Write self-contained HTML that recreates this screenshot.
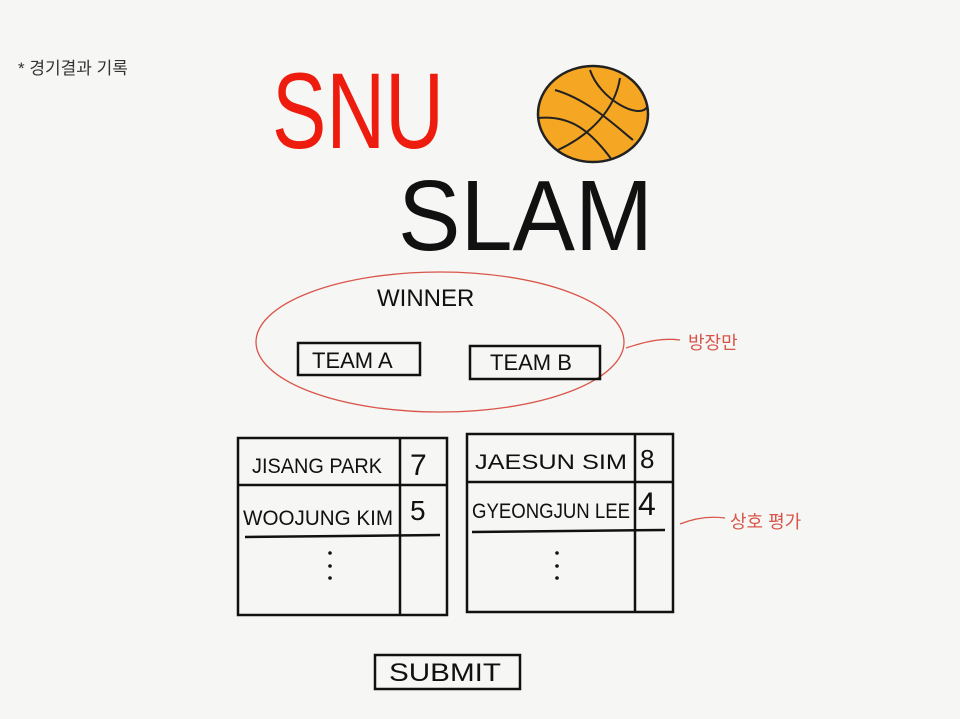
<!DOCTYPE html>
<html><head><meta charset="utf-8"><style>
html,body{margin:0;padding:0;background:#f6f6f4;}
svg{display:block}
text{font-family:"Liberation Sans","Noto Sans CJK KR",sans-serif;}
</style></head><body>
<svg width="960" height="719" viewBox="0 0 960 719" xmlns="http://www.w3.org/2000/svg">
<rect width="960" height="719" fill="#f6f6f4"/>
<text x="18" y="74" font-size="17" fill="#333">* 경기결과 기록</text>
<text x="272" y="148" font-size="108" fill="#ee1c0e" textLength="172" lengthAdjust="spacingAndGlyphs" style="font-family:'Liberation Sans Narrow','Liberation Sans',sans-serif">SNU</text>
<text x="398" y="250" font-size="100" fill="#111" textLength="255" lengthAdjust="spacingAndGlyphs">SLAM</text>
<g>
<ellipse cx="593" cy="114" rx="55" ry="48" fill="#f5a623" stroke="#222" stroke-width="2.5"/>
<path d="M590 70 C600 100 640 120 647 107" stroke="#222" stroke-width="2" fill="none"/>
<path d="M555 90 C590 100 620 130 633 140" stroke="#222" stroke-width="2" fill="none"/>
<path d="M538 118 C570 115 590 130 612 160" stroke="#222" stroke-width="2" fill="none"/>
<path d="M620 78 C615 110 590 135 558 150" stroke="#222" stroke-width="2" fill="none"/>
</g>
<ellipse cx="440" cy="342" rx="184" ry="70" fill="none" stroke="#d9554a" stroke-width="1.3"/>
<text x="377" y="306" font-size="24" fill="#111">WINNER</text>
<rect x="298" y="343" width="122" height="32" fill="none" stroke="#111" stroke-width="2.5"/>
<text x="312" y="368" font-size="22" fill="#111">TEAM A</text>
<rect x="470" y="346" width="130" height="33" fill="none" stroke="#111" stroke-width="2.5"/>
<text x="490" y="370" font-size="22" fill="#111">TEAM B</text>
<path d="M626 348 C650 340 665 338 680 340" stroke="#d9554a" stroke-width="1.3" fill="none"/>
<text x="688" y="349" font-size="18" fill="#d9554a">방장만</text>
<path d="M680 524 C695 518 710 516 725 518" stroke="#d9554a" stroke-width="1.3" fill="none"/>
<text x="730" y="528" font-size="18" fill="#d9554a">상호 평가</text>
<g stroke="#111" stroke-width="2.5" fill="none">
<rect x="238" y="438" width="209" height="177"/>
<line x1="400" y1="438" x2="400" y2="615"/>
<line x1="238" y1="485" x2="447" y2="485"/>
<line x1="245" y1="537" x2="440" y2="535"/>
<rect x="467" y="434" width="206" height="178"/>
<line x1="635" y1="434" x2="635" y2="612"/>
<line x1="467" y1="482" x2="673" y2="482"/>
<line x1="472" y1="532" x2="665" y2="530"/>
</g>
<g fill="#111" font-size="21">
<text x="252" y="473" textLength="130" lengthAdjust="spacingAndGlyphs">JISANG PARK</text>
<text x="410" y="475" font-size="30">7</text>
<text x="243" y="525" textLength="150" lengthAdjust="spacingAndGlyphs">WOOJUNG KIM</text>
<text x="410" y="520" font-size="28">5</text>
<text x="475" y="469" textLength="152" lengthAdjust="spacingAndGlyphs">JAESUN SIM</text>
<text x="640" y="468" font-size="26">8</text>
<text x="472" y="518" textLength="158" lengthAdjust="spacingAndGlyphs">GYEONGJUN LEE</text>
<text x="638" y="515" font-size="32">4</text>
</g>
<g fill="#111"><circle cx="330" cy="553" r="1.8"/><circle cx="330" cy="566" r="1.8"/><circle cx="330" cy="578" r="1.8"/>
<circle cx="557" cy="553" r="1.8"/><circle cx="557" cy="566" r="1.8"/><circle cx="557" cy="578" r="1.8"/></g>
<rect x="375" y="655" width="145" height="34" fill="none" stroke="#111" stroke-width="2.5"/>
<text x="389" y="681" font-size="25" fill="#111" textLength="112" lengthAdjust="spacingAndGlyphs">SUBMIT</text>
</svg>
</body></html>
